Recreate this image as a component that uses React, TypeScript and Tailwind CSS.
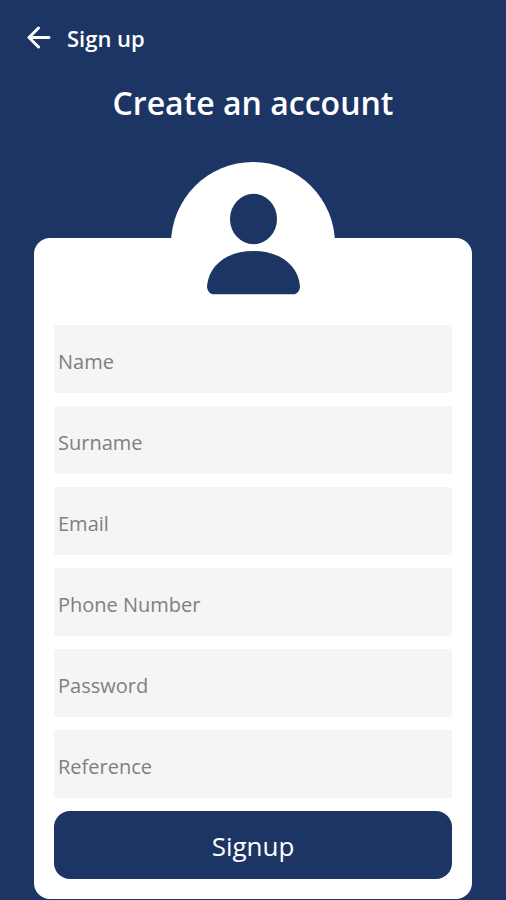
import React from 'react';

interface Field {
	id: string;
	label: string;
	type: string;
}

const fields: Field[] = [
	{ id: 'name', label: 'Name', type: 'text' },
	{ id: 'surname', label: 'Surname', type: 'text' },
	{ id: 'email', label: 'Email', type: 'email' },
	{ id: 'phone', label: 'Phone Number', type: 'tel' },
	{ id: 'password', label: 'Password', type: 'password' },
	{ id: 'reference', label: 'Reference', type: 'text' },
];

const IconBack = () => (
	<svg className="w-6 h-6" viewBox="0 0 24 24" fill="none" stroke="currentColor" strokeWidth="3" strokeLinecap="round" aria-hidden="true">
		<path d="M22 11.500H2.500M11.500 2L2 11.500l9.500 9.500" />
	</svg>
);

const IconPerson = () => (
	<svg className="w-24 h-[104px]" viewBox="0 0 96 104" fill="currentColor" aria-hidden="true">
		<ellipse cx="48.500" cy="27" rx="23.500" ry="25.200" />
		<path d="M2 94C4 73 22 59 48.500 59S93 73 95 94c0 5-3 8.300-7 8.300H9C5 102.300 2 99 2 94z" />
	</svg>
);

const App = () => (
	<main className={`min-h-screen bg-[#1c3565] pb-px font-['Open_Sans','Noto_Sans',sans-serif]`}>
		<header className="flex items-center gap-4 h-[76px] px-[27px] text-white">
			<button type="button" aria-label="Back">
				<IconBack />
			</button>
			<span className="text-[22px] font-semibold">Sign up</span>
		</header>

		<h1 className="h-[86px] text-center text-[32px] leading-[54px] font-semibold text-white">Create an account</h1>

		{/* Avatar sits over the top edge of the card */}
		<div className="relative z-10 flex justify-center w-[164px] h-[148px] -mb-[72px] mx-auto pt-[30px] rounded-t-full bg-white text-[#1c3565]">
			<IconPerson />
		</div>

		<form className="flex flex-col gap-[13px] mx-[34px] px-5 pt-[87px] pb-5 rounded-2xl bg-white">
			{fields.map(({ id, label, type }) => (
				<input
					key={id}
					id={id}
					name={id}
					type={type}
					aria-label={label}
					placeholder={label}
					className="w-full h-[68px] px-1 pt-1 rounded-xs bg-[#f5f5f5] text-[20px] text-gray-800 placeholder:text-[#808080]"
				/>
			))}
			<button type="submit" className="h-[68px] pt-0.5 rounded-2xl bg-[#1c3565] text-[26px] text-white">Signup</button>
		</form>
	</main>
);

export default App;
